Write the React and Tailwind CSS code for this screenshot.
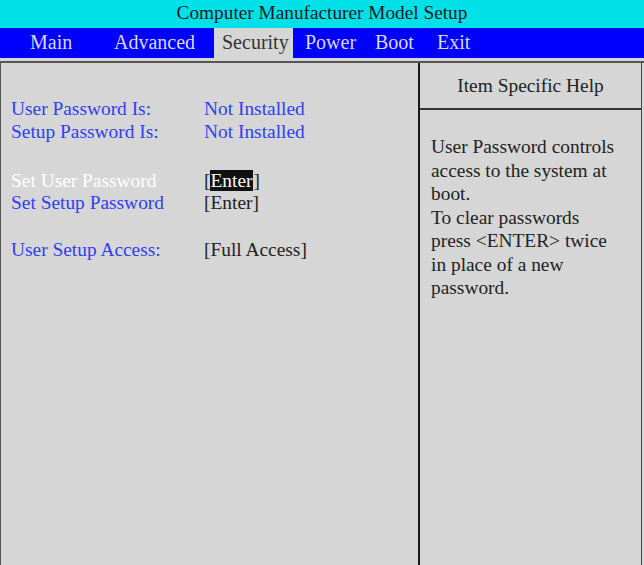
import React from 'react';

const navItems = [
  { label: 'Main', cls: 'ml-[30px] w-[84px]' },
  { label: 'Advanced', cls: 'w-[100px]' },
  { label: 'Security', cls: 'w-[79px] pl-[8px]', active: true },
  { label: 'Power', cls: 'ml-[12px] w-[70px]' },
  { label: 'Boot', cls: 'w-[62px]' },
  { label: 'Exit', cls: 'w-[60px]' },
];

const helpLines = [
  'User Password controls',
  'access to the system at',
  'boot.',
  'To clear passwords',
  'press <ENTER> twice',
  'in place of a new',
  'password.',
];

const App = () => {
  return (
    <div className="w-[644px] h-[565px] overflow-hidden bg-[#d6d6d6] font-['Liberation_Serif',serif] flex flex-col">
      <div className="h-[28px] shrink-0 bg-[#00e0e8] text-[#1a1a1a] text-[19.3px] leading-[25px] text-center">
        Computer Manufacturer Model Setup
      </div>

      <div className="h-[30px] shrink-0 bg-[#0000ff] flex items-stretch text-[20px]">
        {navItems.map((n) => (
          <div
            key={n.label}
            className={`${n.cls} shrink-0 flex items-center pb-[3px] whitespace-nowrap ${n.active ? 'bg-[#d6d6d6] text-[#333]' : 'text-[#d8d8ea]'}`}
          >
            {n.label}
          </div>
        ))}
      </div>

      <div className="h-[3px] shrink-0 bg-[#d6d6d6]"></div>

      <div className="flex-1 flex border-t-2 border-l border-[#555] min-h-0">
        <div className="w-[419px] shrink-0 border-r-2 border-[#1a1a1a] pl-[10px] pt-[35px] text-[19.4px] leading-[22px]">
          <div className="flex text-[#2f3ff0]">
            <span className="w-[193px]">User Password Is:</span>
            <span>Not Installed</span>
          </div>
          <div className="flex text-[#2f3ff0] mt-[1px]">
            <span className="w-[193px]">Setup Password Is:</span>
            <span>Not Installed</span>
          </div>

          <div className="flex mt-[27px]">
            <span className="w-[193px] text-white">Set User Password</span>
            <span className="text-[#222]">
              [<span className="bg-[#111] text-white inline-block leading-[21px] pr-[1px]">Enter</span>]
            </span>
          </div>
          <div className="flex">
            <span className="w-[193px] text-[#2f3ff0]">Set Setup Password</span>
            <span className="text-[#222]">[Enter]</span>
          </div>

          <div className="flex mt-[25px]">
            <span className="w-[193px] text-[#2f3ff0]">User Setup Access:</span>
            <span className="text-[#222]">[Full Access]</span>
          </div>
        </div>

        <div className="w-[222px] shrink-0 border-r border-[#444] flex flex-col">
          <div className="h-[47px] shrink-0 border-b-2 border-[#333] flex items-center justify-center text-[19.4px] text-[#222]">
            Item Specific Help
          </div>
          <div className="pl-[11px] pt-[25px] text-[19.4px] leading-[23.5px] text-[#222] whitespace-nowrap">
            {helpLines.map((l) => (
              <div key={l}>{l}</div>
            ))}
          </div>
        </div>
      </div>
    </div>
  );
};

export default App;
